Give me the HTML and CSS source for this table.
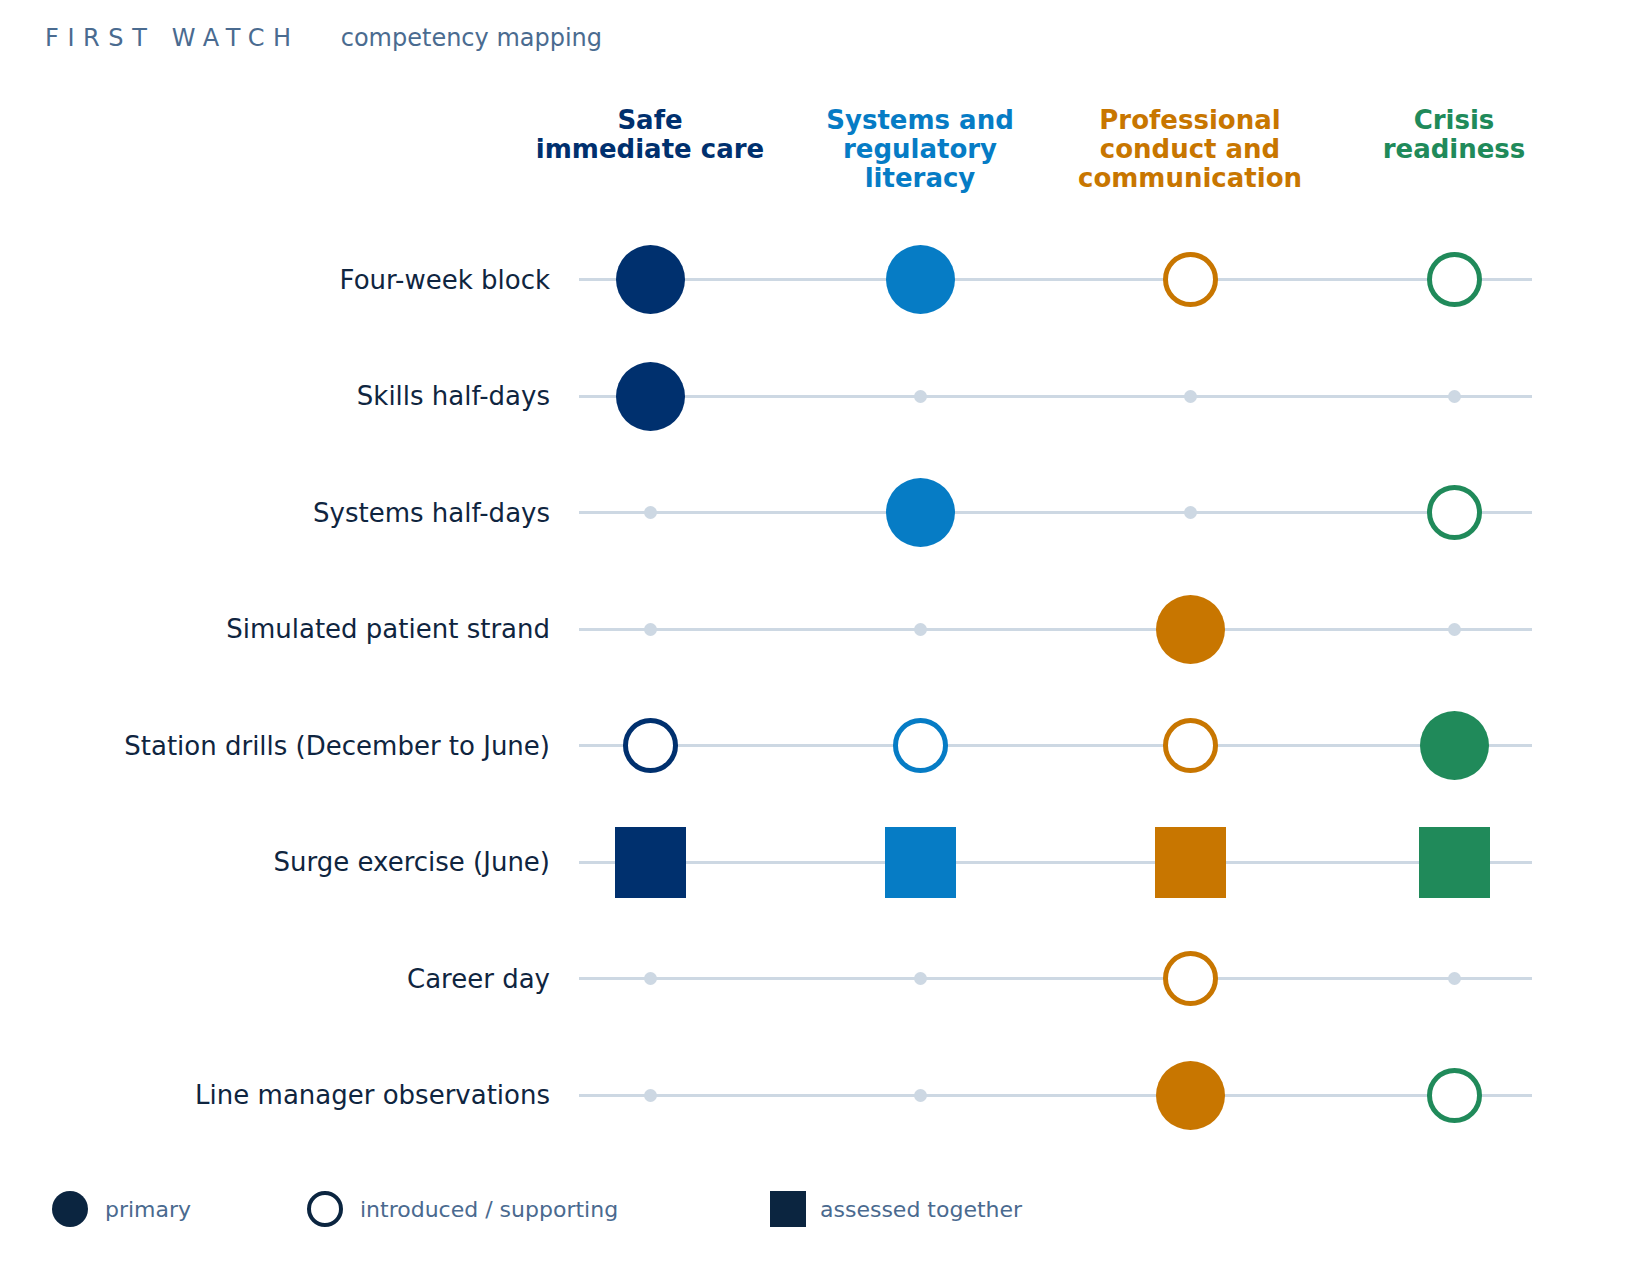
FILE: index.html
```html
<!DOCTYPE html>
<html lang="en">

<head>
    <meta charset="UTF-8">
    <meta name="viewport" content="width=device-width, initial-scale=1.0">
    <title>First Watch - competency mapping</title>
    <link rel="stylesheet" href="styles.css">
</head>

<body>
    <header class="masthead">
        <span class="brand">FIRST WATCH</span>
        <span class="subtitle">competency mapping</span>
    </header>

    <section class="matrix">
        <!-- column headings share the track grid so they sit over the marks -->
        <div class="row heads">
            <div></div>
            <div class="track plain">
                <div class="col-head c-safe">Safe<br>immediate care</div>
                <div class="col-head c-sys">Systems and<br>regulatory<br>literacy</div>
                <div class="col-head c-prof">Professional<br>conduct and<br>communication</div>
                <div class="col-head c-crisis">Crisis<br>readiness</div>
            </div>
        </div>

        <div class="row">
            <div class="row-label">Four-week block</div>
            <div class="track">
                <span class="mark primary c-safe"></span>
                <span class="mark primary c-sys"></span>
                <span class="mark support c-prof"></span>
                <span class="mark support c-crisis"></span>
            </div>
        </div>

        <div class="row">
            <div class="row-label">Skills half-days</div>
            <div class="track">
                <span class="mark primary c-safe"></span>
                <span class="mark none"></span>
                <span class="mark none"></span>
                <span class="mark none"></span>
            </div>
        </div>

        <div class="row">
            <div class="row-label">Systems half-days</div>
            <div class="track">
                <span class="mark none"></span>
                <span class="mark primary c-sys"></span>
                <span class="mark none"></span>
                <span class="mark support c-crisis"></span>
            </div>
        </div>

        <div class="row">
            <div class="row-label">Simulated patient strand</div>
            <div class="track">
                <span class="mark none"></span>
                <span class="mark none"></span>
                <span class="mark primary c-prof"></span>
                <span class="mark none"></span>
            </div>
        </div>

        <div class="row">
            <div class="row-label">Station drills (December to June)</div>
            <div class="track">
                <span class="mark support c-safe"></span>
                <span class="mark support c-sys"></span>
                <span class="mark support c-prof"></span>
                <span class="mark primary c-crisis"></span>
            </div>
        </div>

        <div class="row">
            <div class="row-label">Surge exercise (June)</div>
            <div class="track">
                <span class="mark joint c-safe"></span>
                <span class="mark joint c-sys"></span>
                <span class="mark joint c-prof"></span>
                <span class="mark joint c-crisis"></span>
            </div>
        </div>

        <div class="row">
            <div class="row-label">Career day</div>
            <div class="track">
                <span class="mark none"></span>
                <span class="mark none"></span>
                <span class="mark support c-prof"></span>
                <span class="mark none"></span>
            </div>
        </div>

        <div class="row">
            <div class="row-label">Line manager observations</div>
            <div class="track">
                <span class="mark none"></span>
                <span class="mark none"></span>
                <span class="mark primary c-prof"></span>
                <span class="mark support c-crisis"></span>
            </div>
        </div>
    </section>

    <footer class="legend">
        <div class="key key-primary">
            <span class="swatch dot"></span>
            <span>primary</span>
        </div>
        <div class="key key-support">
            <span class="swatch ring"></span>
            <span>introduced / supporting</span>
        </div>
        <div class="key key-joint">
            <span class="swatch block"></span>
            <span>assessed together</span>
        </div>
    </footer>
</body>

</html>
```

FILE: styles.css
```css
* {
    margin: 0;
    padding: 0;
    box-sizing: border-box;
}

body {
    font-family: "DejaVu Sans", "Liberation Sans", sans-serif;
    background-color: #fff;
    color: #0f2540;
}

/* 顶部标题 */
.masthead {
    display: flex;
    align-items: center;
    padding: 24px 0 0 45px;
    height: 53px;
    font-size: 24px;
    line-height: 29px;
    color: #4a6b90;
}

.brand {
    letter-spacing: 8.6px;
    margin-right: 41px;
}

/* 颜色 */
.c-safe {
    color: #00306e;
}

.c-sys {
    color: #067cc5;
}

.c-prof {
    color: #c87600;
}

.c-crisis {
    color: #208a5a;
}

/* 矩阵 */
.matrix {
    margin-top: 53px;
}

.row {
    display: grid;
    grid-template-columns: 550px 953px;
    column-gap: 29px;
    height: 116.5px;
    align-items: center;
}

.row.heads {
    height: 87px;
    align-items: start;
    margin-bottom: 28.5px;
}

.row-label {
    text-align: right;
    font-size: 26px;
    color: #0f2540;
    white-space: nowrap;
}

/* 横线用背景画 */
.track {
    display: grid;
    grid-template-columns: repeat(4, 142px);
    column-gap: 128px;
    align-items: center;
    justify-items: center;
    height: 100%;
    background: linear-gradient(#cdd8e3, #cdd8e3) center / 100% 3px no-repeat;
}

.track.plain {
    background: none;
    align-items: start;
}

/* 最后一列稍微靠左 */
.track > .mark:nth-child(4) {
    margin-left: -12px;
}

.col-head {
    margin: 0 -64px;
    justify-self: stretch;
    text-align: center;
    font-size: 26px;
    font-weight: bold;
    line-height: 29px;
}

.col-head:nth-child(4) {
    margin-left: -76px;
}

.mark {
    display: block;
}

.mark.primary {
    width: 69px;
    height: 69px;
    border-radius: 50%;
    background-color: currentColor;
}

.mark.support {
    width: 55px;
    height: 55px;
    border-radius: 50%;
    border: 5px solid currentColor;
    background-color: #fff;
}

.mark.none {
    width: 13px;
    height: 13px;
    border-radius: 50%;
    background-color: #cdd8e3;
}

.mark.joint {
    width: 71px;
    height: 71px;
    background-color: currentColor;
}

/* 图例 */
.legend {
    display: flex;
    align-items: center;
    margin-top: 37.5px;
    padding-left: 52px;
    font-size: 22px;
    color: #4a6a8f;
}

.key {
    display: flex;
    align-items: center;
    gap: 17px;
}

.key-primary {
    width: 255px;
}

.key-support {
    width: 463px;
}

.key-joint {
    gap: 14px;
}

.swatch {
    display: block;
    width: 36px;
    height: 36px;
    background-color: #0b2540;
}

.swatch.dot {
    border-radius: 50%;
}

.swatch.ring {
    border-radius: 50%;
    border: 4px solid #0b2540;
    background-color: #fff;
}
```
